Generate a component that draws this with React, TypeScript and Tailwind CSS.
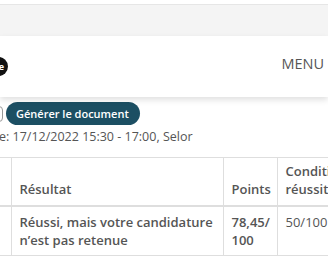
export default function App() {
  return (
    <div className="w-[328px] h-[264px] overflow-hidden bg-white text-[#555] font-['Open_Sans',sans-serif]">
      <div className="h-[4px] bg-white" />
      <div className="h-[32px] bg-[#f4f4f4] border-t border-[#e6e6e6]" />

      <header className="relative z-10 h-[61px] bg-white shadow-[0_3px_6px_rgba(0,0,0,0.12)] flex items-center justify-between">
        <div className="-ml-[11px] w-[19px] h-[19px] rounded-full bg-[#111] text-white text-[9px] font-bold flex items-center justify-center">
          de
        </div>
        <span className="mr-[4px] -mt-[6px] text-[14.5px] text-[#555]">MENU</span>
      </header>

      <div className="pt-[5px]">
        <div className="flex items-center">
          <span className="-ml-[5px] w-[8px] h-[16px] rounded-full border-[1.5px] border-[#999]" />
          <button className="ml-[3px] h-[23px] pl-[10px] pr-[11px] rounded-full bg-[#1c4f63] text-white text-[11px] font-semibold leading-none">
            Générer le document
          </button>
        </div>
        <p className="mt-[2px] -ml-[1px] text-[12.5px] leading-[20px] whitespace-nowrap">
          e: 17/12/2022 15:30 - 17:00, Selor
        </p>
      </div>

      <table className="mt-[10px] w-[390px] table-fixed border-collapse text-[13px] leading-[18px]">
        <colgroup>
          <col className="w-[11px]" />
          <col className="w-[212px]" />
          <col className="w-[54px]" />
          <col className="w-[113px]" />
        </colgroup>
        <thead>
          <tr className="border-t border-b-2 border-[#dedede] align-bottom text-left font-semibold">
            <th className="border-r border-[#dedede]" />
            <th className="border-r border-[#dedede] px-[8px] pt-[4px] pb-[7px] font-semibold">Résultat</th>
            <th className="border-r border-[#dedede] px-[8px] pt-[4px] pb-[7px] font-semibold">Points</th>
            <th className="px-[8px] pt-[4px] pb-[7px] font-semibold whitespace-nowrap">
              Conditions de
              <br />
              réussite
            </th>
          </tr>
        </thead>
        <tbody>
          <tr className="border-b border-[#dedede] align-top">
            <td className="border-r border-[#dedede]" />
            <td className="border-r border-[#dedede] px-[8px] pt-[6px] pb-[6px] font-semibold">
              Réussi, mais votre candidature n’est pas retenue
            </td>
            <td className="border-r border-[#dedede] px-[8px] pt-[6px] pb-[6px] font-semibold">
              78,45/ 100
            </td>
            <td className="px-[8px] pt-[6px] pb-[6px]">50/100</td>
          </tr>
        </tbody>
      </table>
    </div>
  )
}
